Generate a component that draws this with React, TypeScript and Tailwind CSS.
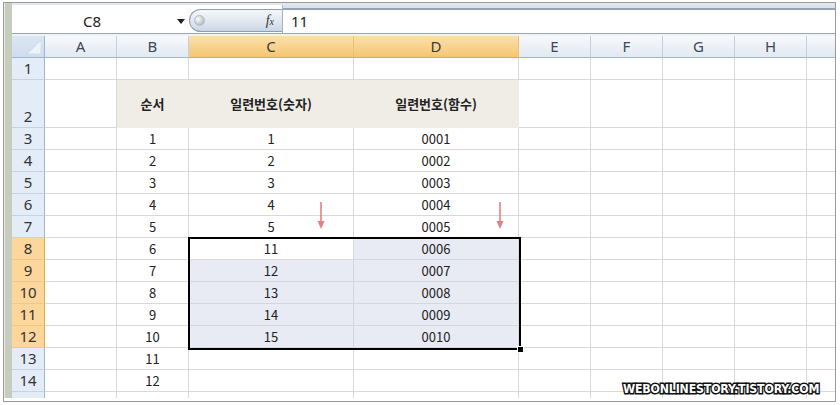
import React from "react";

type Col = { key: string; label: string; w: string; hdrSel?: boolean };

const cols: Col[] = [
  { key: "A", label: "A", w: "w-[72px]" },
  { key: "B", label: "B", w: "w-[72px]" },
  { key: "C", label: "C", w: "w-[165px]", hdrSel: true },
  { key: "D", label: "D", w: "w-[165px]", hdrSel: true },
  { key: "E", label: "E", w: "w-[72px]" },
  { key: "F", label: "F", w: "w-[72px]" },
  { key: "G", label: "G", w: "w-[72px]" },
  { key: "H", label: "H", w: "w-[72px]" },
  { key: "I", label: "", w: "w-[72px]" },
];

function cellValue(r: number, c: string): string {
  if (r < 3) return "";
  if (c === "B") return String(r - 2);
  if (c === "C") {
    if (r <= 7) return String(r - 2);
    if (r <= 12) return String(r + 3);
    return "";
  }
  if (c === "D") {
    if (r <= 12) return String(r - 2).padStart(4, "0");
    return "";
  }
  return "";
}

const rows = Array.from({ length: 15 }, (_, i) => i + 1);

function Arrow() {
  return (
    <svg width="10" height="28" viewBox="0 0 10 28">
      <line x1="5" y1="0" x2="5" y2="22" stroke="#e58080" strokeWidth="1.6" />
      <path d="M1.5 19 L5 27 L8.5 19 Z" fill="#e58080" />
    </svg>
  );
}

export default function App() {
  return (
    <div className="w-[840px] h-[405px] bg-white pt-[2px] pl-[3px] pr-[4px] pb-[3px] overflow-hidden relative font-['Noto_Sans','Noto_Sans_CJK_KR',sans-serif]">
      <div className="w-full h-full border border-[#9a9a9a] pb-[3px] bg-white">
        <div className="w-full h-full flex overflow-hidden">
          {/* sage strip */}
          <div className="w-[8px] shrink-0 bg-[#c7cdbd] border-l border-[#e9ebe4]" />
          {/* main */}
          <div className="flex-1 flex flex-col min-w-0 overflow-hidden">
            {/* formula bar */}
            <div className="h-[2px] shrink-0 bg-[#e4e8ec]" />
            <div className="h-[28px] shrink-0 flex bg-white">
              <div className="w-[160px] shrink-0 flex items-center justify-center pt-[4px] text-[15px] text-[#222]">C8</div>
              <div className="w-[17px] shrink-0 flex items-center justify-center pt-[4px]">
                <svg width="8" height="5" viewBox="0 0 8 5"><path d="M0 0 H8 L4 5 Z" fill="#222" /></svg>
              </div>
              <div className="w-[93px] shrink-0 pt-[4px] pb-[1px]">
                <div className="h-full rounded-l-full border border-r-0 border-[#8d9db2] bg-linear-to-b from-[#f4f7fa] via-[#e3e9f1] to-[#cbd6e3] flex items-center pl-[4px] pr-[8px]">
                  <div className="w-[11px] h-[11px] rounded-full bg-radial-[at_35%_35%] from-[#ffffff] to-[#9aa3ad] border border-[#b8bec6]" />
                  <span className="ml-auto font-['Liberation_Serif',serif] italic text-[14px] text-[#333] leading-none">
                    f<span className="text-[10px]">x</span>
                  </span>
                </div>
              </div>
              <div className="flex-1 flex flex-col border-l border-[#a8b3c0]">
                <div className="h-[3px] shrink-0 bg-[#dbe3ec]" />
                <div className="h-[2px] shrink-0 bg-[#93a3b6]" />
                <div className="flex-1 flex items-center pl-[8px] text-[15px] text-[#222]">11</div>
              </div>
            </div>
            <div className="h-[1px] shrink-0 bg-[#9aa6b4]" />
            <div className="h-[2px] shrink-0 bg-[#eef1f5]" />

            {/* sheet */}
            <div className="relative flex-1 flex flex-col">
              {/* header row */}
              <div className="h-[22px] flex shrink-0">
                <div className="w-[33px] shrink-0 relative bg-linear-to-b from-[#dbe6f3] to-[#cfdced] border-r border-b border-[#9eb6ce]">
                  <svg className="absolute right-[3px] bottom-[3px]" width="14" height="14" viewBox="0 0 14 14">
                    <path d="M14 0 L14 14 L0 14 Z" fill="#eef3f9" stroke="#b7c7d9" strokeWidth="0.5" />
                  </svg>
                </div>
                {cols.map((c) => (
                  <div
                    key={c.key}
                    className={`${c.w} shrink-0 flex items-center justify-center text-[15px] border-r border-b ${
                      c.hdrSel
                        ? "bg-linear-to-b from-[#fae0ad] to-[#f4c670] border-r-[#f0c06a] border-b-[#e3a94a] text-[#3a3a3a]"
                        : "bg-linear-to-b from-[#f7f9fc] to-[#e2e9f1] border-r-[#c4d0dd] border-b-[#9eb6ce] text-[#3d4857]"
                    }`}
                  >
                    {c.label}
                  </div>
                ))}
              </div>

              {rows.map((r) => {
                const tall = r === 2;
                const rowSel = r >= 8 && r <= 12;
                return (
                  <div key={r} className={`${tall ? "h-[48px]" : "h-[22px]"} flex shrink-0`}>
                    <div
                      className={`w-[33px] shrink-0 flex items-end justify-center pb-[1px] text-[15px] leading-[20px] border-r border-b ${
                        rowSel
                          ? "bg-[#fcd69b] border-r-[#e3a94a] border-b-[#f0c887] text-[#333]"
                          : "bg-[#e4ecf7] border-r-[#9eb6ce] border-b-[#c5d3e2] text-[#333]"
                      }`}
                    >
                      {r}
                    </div>
                    {cols.map((c) => {
                      const v = cellValue(r, c.key);
                      const beige = tall && (c.key === "B" || c.key === "C" || c.key === "D");
                      const inSel =
                        r >= 8 && r <= 12 && (c.key === "C" || c.key === "D") && !(r === 8 && c.key === "C");
                      let label = v;
                      if (tall) {
                        if (c.key === "B") label = "순서";
                        if (c.key === "C") label = "일련번호(숫자)";
                        if (c.key === "D") label = "일련번호(함수)";
                      }
                      return (
                        <div
                          key={c.key}
                          className={`${c.w} shrink-0 flex items-center justify-center border-r border-b ${
                            beige
                              ? "bg-[#efede5] border-[#efede5] font-bold text-[13px] text-[#222]"
                              : inSel
                              ? "bg-[#e8ebf4] border-[#d3d7e2] text-[13px] text-[#222]"
                              : "bg-white border-[#d9d9d9] text-[13px] text-[#222]"
                          } font-['Noto_Sans_CJK_KR',sans-serif]`}
                        >
                          {label}
                        </div>
                      );
                    })}
                  </div>
                );
              })}

              {/* selection box */}
              <div className="absolute left-[176px] top-[201px] w-[333px] h-[113px] border-2 border-black" />
              <div className="absolute left-[505px] top-[310px] w-[7px] h-[7px] bg-black border border-white" />

              {/* arrows */}
              <div className="absolute left-[304px] top-[166px]">
                <Arrow />
              </div>
              <div className="absolute left-[483px] top-[166px]">
                <Arrow />
              </div>
            </div>
          </div>
        </div>
      </div>

      {/* watermark */}
      <div className="absolute left-[623px] top-[381px] origin-left scale-x-[0.92] text-[12px] font-black tracking-[-0.2px] text-white font-['DejaVu_Sans',sans-serif] [-webkit-text-stroke:3px_#111] [paint-order:stroke_fill] leading-[16px] whitespace-nowrap">
        WEBONLINESTORY.TISTORY.COM
      </div>
    </div>
  );
}
